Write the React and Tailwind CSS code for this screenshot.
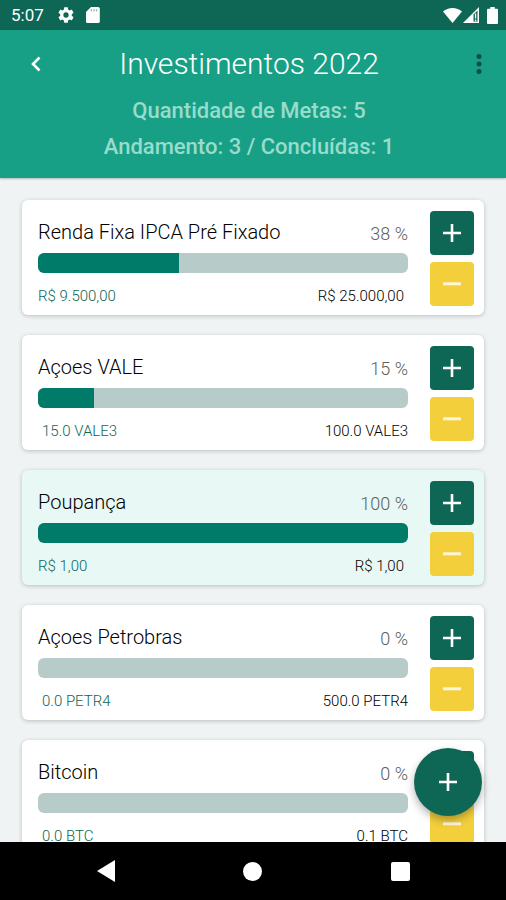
const goals = [
  { name: "Renda Fixa IPCA Pré Fixado", percent: 38, current: "R$ 9.500,00", target: "R$ 25.000,00", currency: true },
  { name: "Açoes VALE", percent: 15, current: "15.0 VALE3", target: "100.0 VALE3" },
  { name: "Poupança", percent: 100, current: "R$ 1,00", target: "R$ 1,00", currency: true },
  { name: "Açoes Petrobras", percent: 0, current: "0.0 PETR4", target: "500.0 PETR4" },
  { name: "Bitcoin", percent: 0, current: "0.0 BTC", target: "0.1 BTC" },
];

function PlusIcon() {
  return (
    <svg viewBox="0 0 18 18" className="size-[18px]" fill="currentColor" aria-hidden="true">
      <path d="M7.700 0h2.600v7.700H18v2.600h-7.700V18H7.700v-7.700H0V7.700h7.700z" />
    </svg>
  );
}

function MinusIcon() {
  return (
    <svg viewBox="0 0 18 18" className="size-[18px]" fill="currentColor" aria-hidden="true">
      <path d="M0 7.3h18v3H0z" />
    </svg>
  );
}

function StatusBar() {
  return (
    <div className="flex h-[30px] shrink-0 items-center bg-[#0e6655] pr-2 pl-[11px] text-white">
      <span className="text-[17px] leading-[30px]">5:07</span>
      <svg viewBox="2 2 20 20" className="ml-[14px] size-4" fill="currentColor" aria-label="Configurações" role="img">
        <path d="M19.14 12.94c.04-.3.06-.61.06-.94 0-.32-.02-.64-.07-.94l2.03-1.58a.49.49 0 0 0 .12-.61l-1.92-3.32a.488.488 0 0 0-.59-.22l-2.39.96c-.5-.38-1.03-.7-1.62-.94l-.36-2.54a.484.484 0 0 0-.48-.41h-3.84c-.24 0-.43.17-.47.41l-.36 2.54c-.59.24-1.13.57-1.62.94l-2.39-.96c-.22-.08-.47 0-.59.22L2.74 8.87c-.12.21-.08.47.12.61l2.03 1.58c-.05.3-.09.63-.09.94s.02.64.07.94l-2.03 1.58a.49.49 0 0 0-.12.61l1.92 3.32c.12.22.37.29.59.22l2.39-.96c.5.38 1.03.7 1.62.94l.36 2.54c.05.24.24.41.48.41h3.84c.24 0 .44-.17.47-.41l.36-2.54c.59-.24 1.13-.56 1.62-.94l2.39.96c.22.08.47 0 .59-.22l1.92-3.32c.12-.22.07-.47-.12-.61zM12 15.3a3.3 3.3 0 1 1 0-6.6 3.3 3.3 0 0 1 0 6.6z" />
      </svg>
      <svg viewBox="0 0 14 16" className="ml-3 h-4 w-[14px]" aria-label="Cartão SD" role="img">
        <path d="M5 0h7.200a1.600 1.600 0 0 1 1.600 1.600v12.800a1.600 1.600 0 0 1-1.600 1.600H1.600A1.600 1.600 0 0 1 0 14.400V5z" fill="currentColor" />
        <path d="M5.300 2v2.400M7.900 2v2.400M10.500 2v2.400" stroke="#9fbdb6" strokeWidth="1.300" />
      </svg>
      <svg viewBox="0 0 19 15" className="ml-auto h-[15px] w-[19px]" fill="currentColor" aria-label="Wi-Fi" role="img">
        <path d="M9.500 15 0 3.600C2.500 1.200 6 0 9.500 0S16.500 1.200 19 3.600z" />
      </svg>
      <svg viewBox="0 0 16 16" className="ml-px size-4" aria-label="Sinal" role="img">
        <path d="M0 16 16 0v16z" fill="currentColor" />
        <path d="M10.500 7.500 14.500 3.500v11h-4z" fill="#0e6655" />
        <path d="M11.900 6.500h1.300v5h-1.300zM11.900 12.500h1.300v1.500h-1.300z" fill="currentColor" />
      </svg>
      <svg viewBox="0 0 11 17" className="ml-2 h-[17px] w-[11px]" fill="currentColor" aria-label="Bateria" role="img">
        <path d="M3.300 0h4.400v1.700H10a1 1 0 0 1 1 1V16a1 1 0 0 1-1 1H1a1 1 0 0 1-1-1V2.700a1 1 0 0 1 1-1h2.300z" />
      </svg>
    </div>
  );
}

function Header() {
  return (
    <header className="z-10 h-[148px] shrink-0 bg-[#17a086] pt-3 shadow-[0_1px_2px_rgba(0,0,0,0.25)]">
      <div className="flex h-11 items-center justify-between px-3">
        <button type="button" aria-label="Voltar" className="flex h-11 w-12 items-center justify-center text-white">
          <svg viewBox="0 0 10 16" className="h-4 w-[10px]" fill="none" stroke="currentColor" strokeWidth="2.600" aria-hidden="true">
            <path d="M8.500 1.500 2 8l6.500 6.500" />
          </svg>
        </button>
        <h1 className="text-[30px] leading-[44px] font-light text-white">Investimentos 2022</h1>
        <button type="button" aria-label="Mais opções" className="flex h-11 w-14 items-center justify-end pr-3 text-[#0b4f43]">
          <svg viewBox="0 0 6 20" className="h-5 w-[6px]" fill="currentColor" aria-hidden="true">
            <circle cx="3" cy="2.500" r="2.500" />
            <circle cx="3" cy="10" r="2.500" />
            <circle cx="3" cy="17.500" r="2.500" />
          </svg>
        </button>
      </div>
      <div className="mt-[7px] pr-2 text-center text-[22px] leading-9 font-medium text-[#98dccc]">
        <p>Quantidade de Metas: 5</p>
        <p>Andamento: 3 / Concluídas: 1</p>
      </div>
    </header>
  );
}

function GoalCard({ goal }) {
  const done = goal.percent >= 100;
  return (
    <li
      className={`flex h-[115px] shrink-0 gap-[22px] rounded-md pt-[11px] pr-[10px] pl-4 shadow-[0_1px_4px_rgba(0,0,0,0.22)] ${
        done ? "bg-[#e8f8f5]" : "bg-white"
      }`}
    >
      <div className="min-w-0 flex-1">
        <div className="flex h-[42px] items-center justify-between">
          <h2 className="text-xl font-light text-black">{goal.name}</h2>
          <span className="pt-1 text-lg font-light text-[#606060]">{goal.percent} %</span>
        </div>
        <div
          role="progressbar"
          aria-label={goal.name}
          aria-valuenow={goal.percent}
          aria-valuemin={0}
          aria-valuemax={100}
          className="h-5 overflow-hidden rounded-md bg-[#b7ccc8]"
        >
          <div className="h-full bg-[#007a69]" style={{ width: `${goal.percent}%` }} />
        </div>
        <div className={`mt-[13px] flex justify-between text-[15px] leading-5 font-light ${goal.currency ? "pr-1" : "pl-1"}`}>
          <span className="text-[#0e6655]">{goal.current}</span>
          <span className="text-black">{goal.target}</span>
        </div>
      </div>
      <div className="flex flex-col gap-[7px]">
        <button type="button" aria-label={`Adicionar a ${goal.name}`} className="flex size-11 items-center justify-center rounded bg-[#0e6655] text-white">
          <PlusIcon />
        </button>
        <button type="button" aria-label={`Retirar de ${goal.name}`} className="flex size-11 items-center justify-center rounded bg-[#f3cf3c] text-[#fdf6d8]">
          <MinusIcon />
        </button>
      </div>
    </li>
  );
}

function NavBar() {
  return (
    <nav className="grid h-[58px] shrink-0 grid-cols-3 items-center bg-black px-8 text-white">
      <button type="button" aria-label="Voltar" className="flex h-11 items-center justify-center">
        <svg viewBox="0 0 18 22" className="h-[22px] w-[18px]" fill="currentColor" aria-hidden="true">
          <path d="M18 0v22L0 11z" />
        </svg>
      </button>
      <button type="button" aria-label="Início" className="flex h-11 items-center justify-center">
        <span className="size-[19px] rounded-full bg-white" />
      </button>
      <button type="button" aria-label="Recentes" className="flex h-11 items-center justify-center">
        <span className="size-[19px] rounded-[2px] bg-white" />
      </button>
    </nav>
  );
}

export default function App() {
  return (
    <div className="flex h-screen flex-col overflow-hidden bg-[#eff3f3] font-[Roboto,sans-serif]">
      <StatusBar />
      <Header />
      <main className="relative min-h-0 flex-1">
        <ul className="flex h-full flex-col gap-5 overflow-hidden px-[22px] pt-[22px]">
          {goals.map((goal) => (
            <GoalCard key={goal.name} goal={goal} />
          ))}
        </ul>
        <button
          type="button"
          aria-label="Nova meta"
          className="absolute right-6 bottom-[26px] flex size-[68px] items-center justify-center rounded-full bg-[#0e6655] text-white shadow-[0_4px_8px_rgba(0,0,0,0.3)]"
        >
          <PlusIcon />
        </button>
      </main>
      <NavBar />
    </div>
  );
}
